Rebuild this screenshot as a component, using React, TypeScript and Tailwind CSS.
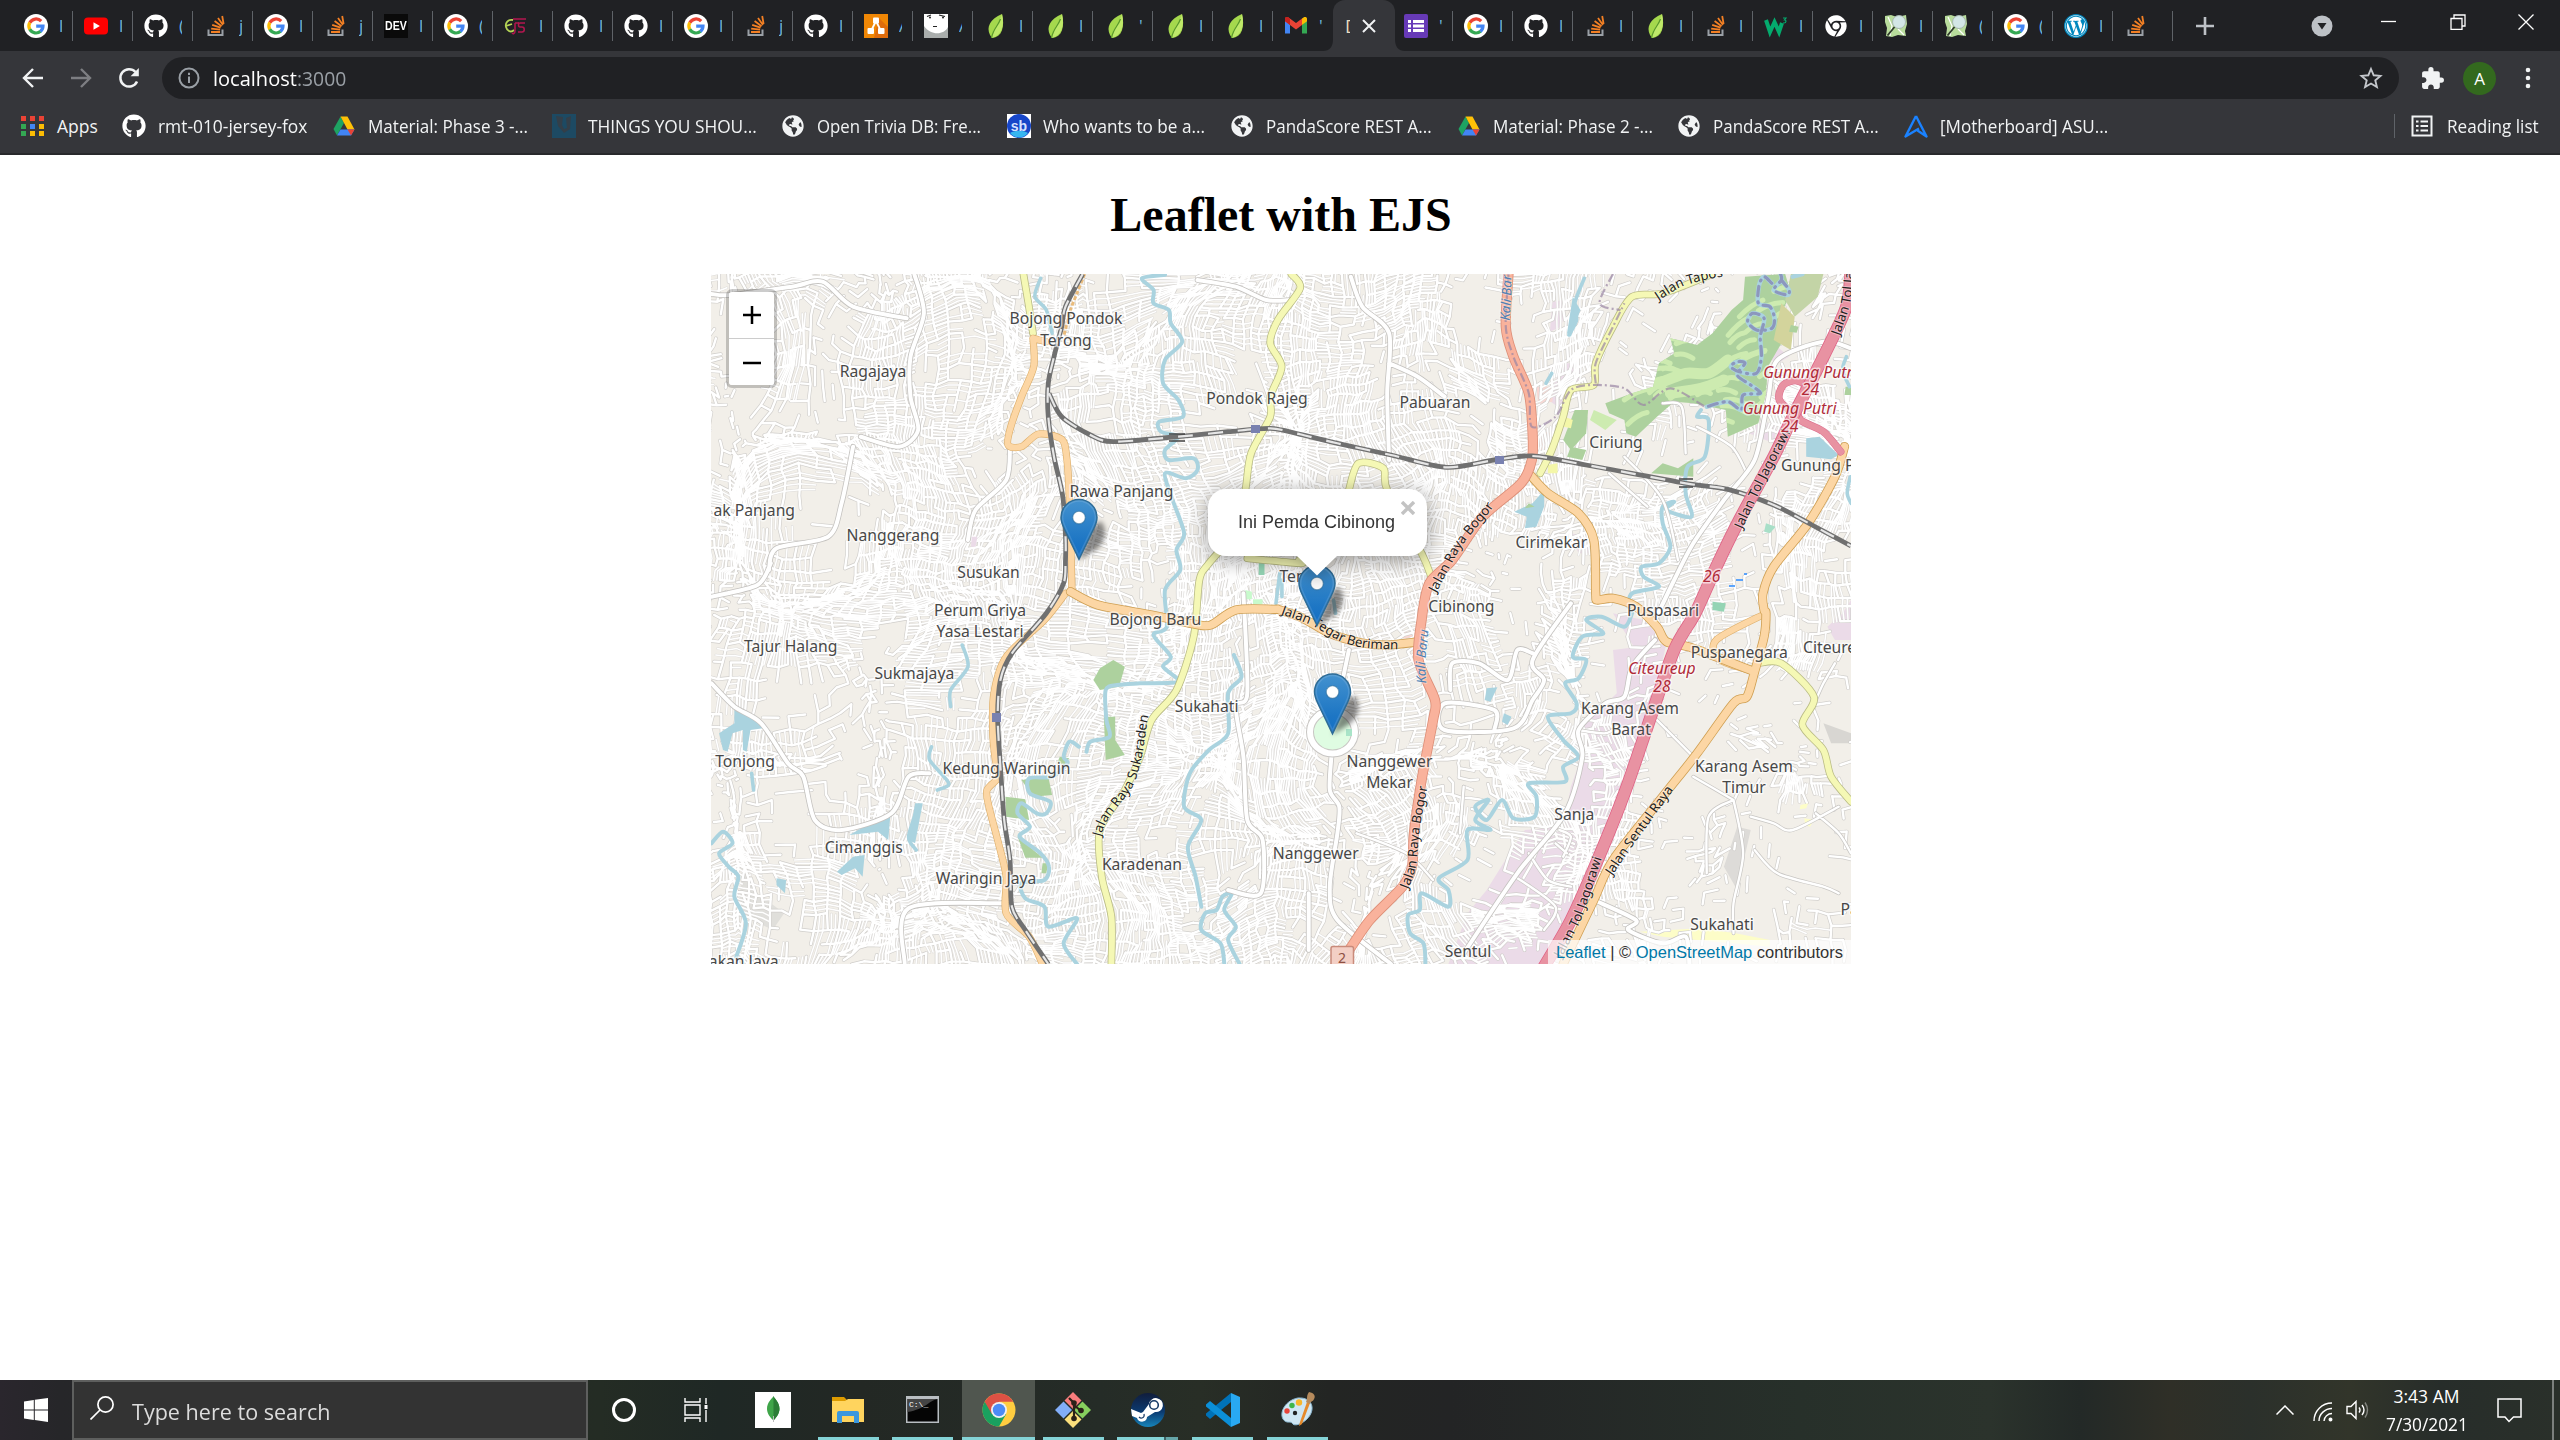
import React, { useLayoutEffect, useRef, useState } from "react";
import { FaChrome, FaGithub, FaWordpress, FaGlobeAmericas } from "react-icons/fa";
import { MdExtension } from "react-icons/md";

/* ---------- helpers ---------- */

/** Text squeezed or stretched to an exact advance width. */
function Fit({ w, className, children }: { w: number; className?: string; children: React.ReactNode }) {
  const ref = useRef<HTMLSpanElement>(null);
  const [k, setK] = useState(1);
  useLayoutEffect(() => {
    if (ref.current && ref.current.offsetWidth) setK(w / ref.current.offsetWidth);
  }, [w]);
  return (
    <span className={`block shrink-0 whitespace-nowrap ${className ?? ""}`} style={{ width: w }}>
      <span ref={ref} className="inline-block origin-left" style={{ transform: `scaleX(${k})` }}>
        {children}
      </span>
    </span>
  );
}

/* ---------- favicons ---------- */

const Google = () => (
  <svg viewBox="0 0 24 24" className="size-6">
    <circle cx="12" cy="12" r="12" fill="#fff" />
    <g fill="none" strokeWidth="3.2">
      <path d="M17.2 7.2A7.1 7.1 0 0 0 5.8 8.7" stroke="#ea4335" />
      <path d="M5.8 8.6a7.1 7.1 0 0 0 0 6.9" stroke="#fbbc05" />
      <path d="M5.8 15.3a7.1 7.1 0 0 0 10.8 2" stroke="#34a853" />
      <path d="M16.4 17.5a7 7 0 0 0 2.6-5.4h-6.8" stroke="#4285f4" />
    </g>
  </svg>
);
const YouTube = () => (
  <svg viewBox="0 0 24 24" className="size-6">
    <rect y="3.5" width="24" height="17" rx="4" fill="#f00" />
    <path d="M9.5 8.3v7.4l6.4-3.7z" fill="#fff" />
  </svg>
);
const GitHub = () => <FaGithub className="size-6 text-white" />;
const Stack = () => (
  <svg viewBox="0 0 24 24" className="size-6" fill="none">
    <path d="M4.5 15.5V21h14v-5.5" stroke="#9aa0a6" strokeWidth="2" />
    <path d="M7 18h9M7.2 14.6l8.9 1M8.2 10.8l8.4 2.9M10.6 7l7 5.2M14 4l5 7M18.2 2l1.4 8" stroke="#f48024" strokeWidth="1.8" />
  </svg>
);
const Dev = () => (
  <span className="flex size-6 items-center justify-center bg-[#0a0a0a]">
    <Fit w={22} className="font-['Liberation_Sans'] text-[13px] font-bold leading-6 text-white">DEV</Fit>
  </span>
);
const Ejs = () => (
  <svg viewBox="0 0 24 24" className="size-6" fill="none" strokeWidth="1.8">
    <path d="M9 6c-5-1-8 3-7 7s5 6 8 3M2 12l6-2" stroke="#b4d455" />
    <path d="M11 9v8c0 3-2 3-3 2M9 5h13M21 9h-5c-2 0-2 4 0 4h2c3 0 3 5 0 5h-4M11 9h4" stroke="#b3164f" strokeWidth="1.500" />
  </svg>
);
const Draw = () => (
  <svg viewBox="0 0 24 24" className="size-6">
    <rect width="24" height="24" fill="#f08705" />
    <path d="M15 4l9 9v11H10z" fill="#df6c0c" />
    <path d="M12 7L7 17M12 7l5 10" stroke="#fff" strokeWidth="1.8" />
    <rect x="9" y="3.5" width="6" height="6" rx="1" fill="#fff" />
    <rect x="3.5" y="14" width="6.5" height="6" rx="1" fill="#fff" />
    <rect x="14" y="14" width="6.5" height="6" rx="1" fill="#fff" />
  </svg>
);
const Face = () => (
  <svg viewBox="0 0 24 24" className="size-6">
    <rect width="24" height="24" fill="#a9adac" />
    <path d="M0 0h24v13c-4 8-17 9-24-1z" fill="#fff" />
    <path d="M3 2.500l4-1.500M15 1l6 1.500M9 12.500h4" stroke="#222" strokeWidth="1.100" />
    <circle cx="6" cy="3.500" r="1" fill="#222" />
    <circle cx="19" cy="3.500" r="1" fill="#222" />
  </svg>
);
const Leaf = () => (
  <svg viewBox="0 0 24 24" className="size-6">
    <path d="M18 0C6 5 2 13 6 21l2 3c10-1 13-11 10-24z" fill="#a5d84d" />
    <path d="M18 0c-2 8-9 13-10.500 24C17 22 21 12 18 0z" fill="#bfe86a" />
    <path d="M16.500 5C14 12 9 15 7.500 24" stroke="#5a9a2a" strokeWidth="1.300" fill="none" />
  </svg>
);
const Gmail = () => (
  <svg viewBox="0 0 24 24" className="size-6">
    <path d="M1 5.500v14h5V11z" fill="#4285f4" />
    <path d="M23 5.500v14h-5V11z" fill="#34a853" />
    <path d="M18 4.500V11l5-3.700V5c0-2-2-2.500-3.500-1.500z" fill="#fbbc04" />
    <path d="M1 7.300V5c0-2 2-2.500 3.500-1.500L12 9l6-4.500V11l-6 4.500L6 11z" fill="#ea4335" />
    <path d="M1 5v2.300L6 11V4.600L4.500 3.500C3 2.500 1 3 1 5z" fill="#c5221f" />
  </svg>
);
const Forms = () => (
  <svg viewBox="0 0 24 24" className="size-6">
    <rect width="24" height="24" rx="2" fill="#673ab7" />
    <path d="M4 6h3v3H4zM9 6h11v3H9zM4 10.500h3v3H4zM9 10.500h11v3H9zM4 15h3v3H4zM9 15h11v3H9z" fill="#fff" />
  </svg>
);
const W3 = () => (
  <svg viewBox="0 0 24 24" className="size-6" fill="none">
    <path d="M2 6l4 12 4.500-10L15 18l3-9" stroke="#04aa6d" strokeWidth="4" />
    <path d="M19 4h3l-1.500 2c2 0 2 3-.5 3H19" stroke="#04aa6d" strokeWidth="1.200" />
  </svg>
);
const ChromeMono = () => <FaChrome className="size-[22px] text-white" />;
const Osm = () => (
  <svg viewBox="0 0 24 24" className="size-6">
    <path d="M1 2l6-1 6 2 9-2 1 9-2 7 1 5-8-1-6 2-6-1 1-8-2-6z" fill="#b8dc9c" />
    <path d="M4 3l4 9-2 10M14 15l6 6" stroke="#fff" strokeWidth="1.200" fill="none" />
    <circle cx="15" cy="8" r="6.500" fill="#d3e6e6" stroke="#a8b8b0" />
    <path d="M10.500 13L3.500 21.500" stroke="#2f3a2a" strokeWidth="1.800" />
  </svg>
);
const WordPress = () => (
  <span className="flex size-6 items-center justify-center rounded-full bg-[#0087be]">
    <FaWordpress className="size-[22px] text-white" />
  </span>
);
const Drive = () => (
  <svg viewBox="0 0 24 24" className="size-6">
    <path d="M8.500 2.500L1.500 15 5 21.500 12 9z" fill="#1ea362" />
    <path d="M8.500 2.500h7L22.500 15.500h-7z" fill="#ffc107" />
    <path d="M5 21.500l3.500-6h14l-3.500 6z" fill="#4285f4" />
    <path d="M15.500 15.500h7L19 21.500z" fill="#ea4335" />
  </svg>
);
const Things = () => (
  <svg viewBox="0 0 24 24" className="size-6">
    <rect width="24" height="24" fill="#1d4a63" />
    <path d="M4 2l2 10 6 7 6-4 1-13-5 2 1 10-3 1-2-4 1-8z" fill="#333f49" />
  </svg>
);
const Globe = () => (
  <span className="flex size-6 items-center justify-center">
    <FaGlobeAmericas className="size-[22px] text-[#f1f3f4]" />
  </span>
);
const Sb = () => (
  <svg viewBox="0 0 24 24" className="size-6">
    <rect width="24" height="24" fill="#fff" />
    <circle cx="12" cy="12" r="12" fill="#1746c9" />
    <path d="M3 19c5-3 13-3 18 0-5 6-13 6-18 0z" fill="#36b6f0" />
    <text x="12" y="17" textAnchor="middle" fontFamily="Liberation Sans" fontWeight="bold" fontSize="14" fill="#d6e2ff">sb</text>
  </svg>
);
const Asus = () => (
  <svg viewBox="0 0 24 24" className="size-6" fill="none" stroke="#1a82ff" strokeWidth="2.400" strokeLinejoin="round">
    <path d="M12 2L1.500 22.500 15 14.500M12 2l10.500 20.500-9-6" />
  </svg>
);
const Apps = () => (
  <span className="grid size-6 grid-cols-3 content-center justify-end gap-[2.500px]">
    {["bg-[#ea4335]", "bg-[#ea4335]", "bg-[#ea4335]", "bg-[#34a853]", "bg-[#4285f4]", "bg-[#fbbc04]", "bg-[#34a853]", "bg-[#fbbc04]", "bg-[#fbbc04]"].map((c, i) => (
      <span key={i} className={`size-[5px] ${c}`} />
    ))}
  </span>
);

/* ---------- tab strip ---------- */

const tabs: [React.FC | null, string][] = [
  [Google, "l"], [YouTube, "l"], [GitHub, "("], [Stack, "j"], [Google, "l"], [Stack, "j"], [Dev, "l"], [Google, "("],
  [Ejs, "l"], [GitHub, "l"], [GitHub, "l"], [Google, "l"], [Stack, "j"], [GitHub, "l"], [Draw, "A"], [Face, "A"],
  [Leaf, "l"], [Leaf, "l"], [Leaf, "'"], [Leaf, "l"], [Leaf, "l"], [Gmail, "'"], [null, "D"], [Forms, "'"],
  [Google, "l"], [GitHub, "l"], [Stack, "l"], [Leaf, "l"], [Stack, "l"], [W3, "l"], [ChromeMono, "l"], [Osm, "l"],
  [Osm, "("], [Google, "("], [WordPress, "l"], [Stack, ""],
];

function TabStrip() {
  return (
    <div className="flex h-[51px] bg-[#202124] pl-[13px]">
      {tabs.map(([Icon, t], i) =>
        Icon ? (
          <div key={i} className="flex h-[51px] w-[60px] shrink-0 items-center pl-[11px]">
            <span className="flex size-6 items-center justify-center">
              <Icon />
            </span>
            <span className="ml-[11px] w-[3px] overflow-hidden text-[17px] leading-[22px] text-[#6fb4dc]">{t}</span>
            <span className={`ml-auto h-[30px] w-[1.500px] ${i === 21 ? "bg-transparent" : "bg-[#5f6368]"}`} />
          </div>
        ) : (
          <div key={i} className="flex h-[51px] w-[60px] shrink-0">
            <div className="relative flex h-[51px] w-[62px] shrink-0 items-center rounded-t-[12px] bg-[#35363a] pl-[12px]">
              <svg viewBox="0 0 82 12" className="absolute -left-[10px] bottom-0 h-3 w-[82px]">
                <path d="M0 12q10 0 10-12v12zM82 12q-10 0-10-12v12z" fill="#35363a" />
              </svg>
              <span className="w-[5px] overflow-hidden text-[18px] leading-6 text-[#e8dcc0]">{t}</span>
              <svg viewBox="0 0 14 14" className="ml-[12px] size-[14px]" stroke="#f1f3f4" strokeWidth="2">
                <path d="M1 1l12 12M13 1L1 13" />
              </svg>
            </div>
          </div>
        ),
      )}
      <svg viewBox="0 0 18 18" className="ml-[23px] mt-[17px] size-[18px]" stroke="#bdc1c6" strokeWidth="2.600">
        <path d="M9 0v18M0 9h18" />
      </svg>
      <svg viewBox="0 0 22 22" className="ml-[97px] mt-[15px] size-[22px]">
        <circle cx="11" cy="11" r="10.500" fill="#bdc1c6" />
        <path d="M6.500 8h9L11 14.500z" fill="#202124" />
      </svg>
      <svg viewBox="0 0 16 16" className="ml-[48px] mt-[14px] size-4" stroke="#fff" strokeWidth="1.300">
        <path d="M0 7.500h15" />
      </svg>
      <svg viewBox="0 0 16 16" className="ml-[53px] mt-[14px] size-4" stroke="#fff" strokeWidth="1.300" fill="none">
        <path d="M1 4.500h11v11H1zM4 4V1h11v11h-3" />
      </svg>
      <svg viewBox="0 0 16 16" className="ml-[52px] mt-[14px] size-4" stroke="#fff" strokeWidth="1.300">
        <path d="M.5.500l15 15M15.500.500l-15 15" />
      </svg>
    </div>
  );
}

function Toolbar() {
  return (
    <div className="flex h-[54px] items-center bg-[#35363a] pl-[22px]">
      <svg viewBox="0 0 22 22" className="size-[22px]" fill="none" stroke="#f1f3f4" strokeWidth="2.400">
        <path d="M21 11H2.500M11 2l-9 9 9 9" />
      </svg>
      <svg viewBox="0 0 22 22" className="ml-[26px] size-[22px]" fill="none" stroke="#7d7e82" strokeWidth="2.400">
        <path d="M1 11h18.500M11 2l9 9-9 9" />
      </svg>
      <svg viewBox="0 0 22 22" className="ml-[26px] size-[22px]" fill="none" stroke="#f1f3f4" strokeWidth="2.500">
        <path d="M19 14.500A8.700 8.700 0 1 1 17.500 5" />
        <path d="M20.800 1v8.200h-8.200z" fill="#f1f3f4" stroke="none" />
      </svg>
      <div className="ml-[22px] flex h-[42px] w-[2237px] items-center rounded-full bg-[#202124] pl-[16px]">
        <svg viewBox="0 0 22 22" className="size-[22px]" fill="none" stroke="#9aa0a6" strokeWidth="2">
          <circle cx="11" cy="11" r="9.500" />
          <path d="M11 9.500V16M11 5.800V8" />
        </svg>
        <Fit w={84} className="ml-[13px] text-[20.500px] leading-[30px] text-white">localhost</Fit>
        <Fit w={49} className="text-[20.500px] leading-[30px] text-[#9aa0a6]">:3000</Fit>
        <svg viewBox="0 0 24 24" className="ml-auto mr-[16px] size-[24px]" fill="none" stroke="#c4c7cc" strokeWidth="1.900">
          <path d="M12 3l2.700 6.300 6.800.6-5.200 4.500 1.600 6.700L12 17.500l-5.900 3.600 1.600-6.700L2.500 9.900l6.800-.6z" />
        </svg>
      </div>
      <MdExtension className="ml-[21px] size-[25px] text-[#f1f3f4]" />
      <span className="ml-[18px] flex size-[33px] items-center justify-center rounded-full bg-[#33691e] text-[17px] leading-none text-white">A</span>
      <svg viewBox="0 0 6 22" className="ml-[29px] h-[22px] w-[6px]" fill="#f1f3f4">
        <circle cx="3" cy="3" r="2.300" />
        <circle cx="3" cy="11" r="2.300" />
        <circle cx="3" cy="19" r="2.300" />
      </svg>
    </div>
  );
}

const bookmarks: [React.FC, string, number, string][] = [
  [Apps, "Apps", 41, "w-[101px]"],
  [GitHub, "rmt-010-jersey-fox", 149, "w-[210px]"],
  [Drive, "Material: Phase 3 -...", 160, "w-[220px]"],
  [Things, "THINGS YOU SHOU...", 169, "w-[229px]"],
  [Globe, "Open Trivia DB: Fre...", 164, "w-[226px]"],
  [Sb, "Who wants to be a...", 162, "w-[223px]"],
  [Globe, "PandaScore REST A...", 166, "w-[227px]"],
  [Drive, "Material: Phase 2 -...", 160, "w-[220px]"],
  [Globe, "PandaScore REST A...", 166, "w-[227px]"],
  [Asus, "[Motherboard] ASU...", 168, "w-[210px]"],
];

function Bookmarks() {
  return (
    <div className="flex h-[50px] items-center border-b-2 border-[#28292c] bg-[#35363a] pb-[6px] pl-[21px] pr-[21px] text-[17.500px] text-[#f1f3f4]">
      {bookmarks.map(([Icon, label, w, cls], i) => (
        <div key={i} className={`flex h-6 shrink-0 items-center ${cls}`}>
          <Icon />
          <Fit w={w} className="ml-3 leading-6">{label}</Fit>
        </div>
      ))}
      <span className="ml-auto h-6 w-[1.500px] bg-[#5f6368]" />
      <svg viewBox="0 0 22 22" className="ml-[16px] size-[22px]" fill="none" stroke="#f1f3f4" strokeWidth="2">
        <rect x="1.500" y="1.500" width="19" height="19" />
        <path d="M5 6.500h2.500M9.500 6.500H17M5 11h2.500M9.500 11H17M5 15.500h2.500M9.500 15.500H17" />
      </svg>
      <Fit w={92} className="ml-[14px] leading-6">Reading list</Fit>
    </div>
  );
}

/* ---------- map geometry ---------- */

/** The map is digitised in four sheets (a, b, c, d), each with its own origin and a common scale. */
const sheets: Record<string, [number, number]> = { a: [700, 170], b: [1280, 260], c: [700, 560], d: [1280, 600] };
const pts = (s: string): [number, number][] =>
  s.trim().split(/\s+/).map((p) => {
    const [ox, oy] = sheets[p[0]];
    const [u, v] = p.slice(1).split(",").map(Number);
    return [ox + u / 2.613, oy + v / 3];
  });
const n1 = (n: number) => n.toFixed(1);
function line(s: string) {
  const p = pts(s);
  let d = `M${n1(p[0][0])} ${n1(p[0][1])}`;
  for (let i = 0; i < p.length - 1; i++) {
    const a = p[Math.max(0, i - 1)], b = p[i], c = p[i + 1], e = p[Math.min(p.length - 1, i + 2)];
    d += `C${n1(b[0] + (c[0] - a[0]) / 7)} ${n1(b[1] + (c[1] - a[1]) / 7)} ${n1(c[0] - (e[0] - b[0]) / 7)} ${n1(c[1] - (e[1] - b[1]) / 7)} ${n1(c[0])} ${n1(c[1])}`;
  }
  return d;
}
const area = (s: string) => "M" + pts(s).map((p) => `${n1(p[0])} ${n1(p[1])}`).join("L") + "Z";

const rails = [
  "a1000,312 a955,410 a945,470 a925,560 a910,640 a910,740 a925,860 a948,980 a955,1100 c955,0 c950,70 c905,160 c815,280 c785,360 c778,470 c785,620 c795,780 c810,900 c815,1040 c850,1110 c910,1212",
  "a912,670 a945,740 a1020,795 a1080,815 a1250,800 a1380,785 a1490,775 a1568,793 b150,550 b290,585 b435,622 b560,600 b660,588 b800,615 b1060,670 b1170,688 b1290,735 b1390,795 b1492,858",
].map(line);
const orange = [
  "a870,505 a872,590 a840,680 a812,770 a805,825 a840,830 a885,792 a945,808 a958,860 a965,980 a970,1170 c972,95",
  "a905,515 a870,505",
  "c955,100 c900,180 c800,290 c768,400 c765,520 c772,600 c780,650 c750,690 c755,740 c780,850 c800,950 c800,1060 c860,1130 c895,1212",
  "d1270,40 d1140,120 d1150,180 d1240,215",
].map(line);
const orangeWide = [
  "c968,95 c1040,135 c1180,165 c1290,192 c1335,195 c1400,150 c1500,148 d0,30 d60,55 d130,100 d210,128 d280,135 d365,125",
  "b650,640 b700,700 b780,760 b820,840 b825,1000 b830,1020 b870,1015 d930,20 d985,80 d1010,125 d1080,145 d1240,215",
  "b1475,560 b1450,650 b1380,790 b1290,920 b1262,1000 b1265,1050 d1270,40 d1265,110 d1240,215 d1220,290 d1185,310 d1090,460 d1000,590 d870,780 d820,900 d740,1092",
].map(line);
const primary = [
  "b597,42 b590,200 b610,290 b650,400 b660,520 b658,600 b630,670 b530,770 b450,900 b390,970 b370,1080 d362,180 d405,300 d400,360 d370,540 d350,700 d345,800 d320,860 d235,960 d175,1060",
].map(line);
const motorway = [
  "b1492,30 b1480,140 b1420,290 b1340,470 b1290,590 b1200,780 b1140,920 b1085,1060 d1030,150 d960,380 d900,580 d830,780 d760,960 d690,1100",
].map(line);
const ramps = [
  "b1350,470 b1305,420 b1315,375 b1350,362 b1380,385 b1355,440 b1360,480 b1420,515 b1465,575",
].map(line);
const yellow = [
  "a845,312 a858,400 a870,490",
  "a1545,312 a1568,355 a1510,450 a1490,520 a1520,590 a1490,680 a1490,740 a1440,850 a1425,960 a1400,1080 a1330,1180 c1305,60 c1290,230 c1245,390 c1180,480 c1150,590 c1110,690 c1045,810 c1050,950 c1075,1070 c1075,1212",
  "b1130,42 b1000,100 b920,110 b870,200 b825,310 b820,375 b760,390 b740,470 b710,570 b680,640",
  "b180,690 b205,610 b270,625 b280,690 b370,880 b395,950",
  "a1430,1165 a1568,1180 b50,900",
  "d1250,190 d1310,190 d1395,290 d1365,375 d1420,450 d1440,530 d1492,605",
].map(line);
const rivers = [
  "a1215,314 a1155,325 a1185,360 a1185,400 a1225,420 a1230,460 a1260,515 a1215,570 a1210,640 a1250,690 a1262,740 a1200,755 a1205,785 a1250,800 a1215,840 a1225,870 a1290,865 a1300,900 a1270,925 a1215,910 a1235,990 a1265,1090 a1245,1140 a1255,1200 c1215,90 c1220,200 c1185,225 c1230,290 c1210,320 c1250,365 c1150,370 c1090,375 c1060,390 c1062,480 c1070,530 c1020,545 c1010,575",
  "c990,560 c965,545 c950,590 c960,610 c920,650 c860,655 c862,700 c915,725 c905,760 c880,760 c840,730 c830,760 c862,800 c835,830 c890,880 c912,920 c900,960 c840,970 c850,1015 c900,1040 c910,1100 c985,1075 c950,1150 c985,1212",
  "c1395,285 c1415,350 c1380,400 c1380,520 c1330,570 c1280,640 c1265,740 c1310,780 c1275,860 c1295,950 c1310,1040",
  "c1410,1212 c1380,1140 c1400,1100 c1370,1050 c1390,1000 c1365,1010 c1350,1050 c1320,1060 c1310,1110 c1360,1150 c1370,1212",
  "c30,850 c60,815 c85,850 c50,880 c75,920 c100,950 c90,1010 c120,1090 c95,1190",
  "d920,40 d900,80 d840,50 d800,60 d845,100 d790,110 d765,170 d800,180 d780,235 d745,250 d775,310 d760,340 d700,350 d740,420 d780,470 d740,500 d745,545 d650,550 d670,590 d665,650 d610,655 d580,600 d540,660 d510,620 d545,600 d510,660 d550,690 d490,690 d490,780 d415,835 d440,870 d440,920 d370,880 d365,930 d335,945 d340,1000 d375,1030 d380,1092",
  "b1100,450 b1090,470 b1120,480 b1110,590 b1065,620 b1060,700 b1075,770 b1010,750 b1030,725 b1000,740 b1000,790 b1020,860 b990,910 b945,920 b950,950 b990,980 b920,1000 b910,1040",
].map(line);
const streams = [
  "a890,325 a875,380 a905,420 a920,490", "c685,255 c700,320 c655,390 c655,440", "c605,560 c600,600 c650,670 c620,690",
  "b795,55 b770,130 b775,180 b755,225", "d140,0 d145,40", "c570,740 c545,830 c565,870", "c135,640 c140,690",
  "c1515,40 c1505,130", "b1480,290 b1470,330 b1488,380", "b5,960 b5,1010", "b710,340 b695,370", "b1490,650 b1482,700 b1492,730",
].map(line);
const mains = [
  "a30,372 a80,375 a240,350 a320,335 a400,410 a540,445", "a560,312 a585,430 a550,560 a550,680 a570,780 a520,830 a420,800",
  "a400,830 a370,1000 a335,1100 a200,1135 a180,1200", "a810,830 a800,930 a720,1020 a700,1110",
  "c30,370 c90,440 c160,490 c230,610 c270,650 c300,780 c370,810 c500,760 c545,650 c600,640", "c30,110 c150,75 c185,10",
  "c535,1212 c545,1045 c800,1030", "c1420,100 c1430,400 c1400,440 c1420,590 c1430,780 c1470,840 c1465,1000 c1380,990",
  "b185,50 b215,140 b285,220 b280,400 b285,600", "b285,310 b360,350 b430,410", "a1300,330 a1400,350 a1480,390 a1545,390",
  "b1492,265 b1420,245 b1300,300 b1275,420 b1240,600 b1160,720 b1080,850 b1030,960 b980,1080",
  "d760,10 d660,180 d690,240 d660,300 d610,385 d430,390 d430,310 d560,330 d560,390", "d660,160 d620,150 d595,240 d520,190 d450,190 d445,270",
  "d980,120 d920,200 d900,290 d850,310 d780,390 d790,470 d745,640 d620,820 d480,1060",
  "d135,460 d130,570 d155,620 d150,700 d130,860 d150,960 d290,1092", "d180,150 d160,260", "d75,1050 d75,880",
  "d820,900 d930,960 d910,990 d1000,1030 d1060,1010 d1070,1092",
].map(line);
const lanes = [
  "d1185,600 d1120,650 d1115,820", "d1185,600 d1210,760 d1185,910 d1185,1000", "d1230,650 d1290,670 d1340,690 d1460,620",
  "d1080,530 d1185,600", "d615,830 d720,920 d690,990", "d650,760 d700,840 d760,860", "d480,560 d470,700", "d200,700 d330,760 d400,840",
  "d1240,750 d1300,820 d1420,860 d1460,880", "d1400,300 d1420,250 d1450,190", "d1400,640 d1460,700 d1492,760", "d950,320 d1080,470",
  "b900,590 b1000,720 b1040,900", "b860,640 b960,740", "b1090,500 b1180,560 b1220,640", "b1000,430 b1050,440 b1060,580",
  "d780,390 d850,400 d880,380", "d730,690 d760,710 d740,770", "d720,730 d750,760",
].map(line);

/* Deterministic noise drives the residential street network. */
let seed = 77;
const rnd = () => {
  seed = (seed * 16807) % 2147483647;
  return seed / 2147483647;
};
const hash = (x: number, y: number) => {
  const s = Math.sin(x * 127.1 + y * 311.7) * 43758.5453;
  return s - Math.floor(s);
};
const noise = (x: number, y: number) => {
  const i = Math.floor(x), j = Math.floor(y);
  let f = x - i, g = y - j;
  f = f * f * (3 - 2 * f);
  g = g * g * (3 - 2 * g);
  return (hash(i, j) * (1 - f) + hash(i + 1, j) * f) * (1 - g) + (hash(i, j + 1) * (1 - f) + hash(i + 1, j + 1) * f) * g;
};
const density = (x: number, y: number) => {
  let k = noise(x / 46, y / 46) * 0.75 + noise(x / 20 + 9, y / 20) * 0.25;
  if (x < 900) k -= 0.05;
  else if (x < 1420) k += 0.15;
  if (x > 1420) k -= 0.04;
  if (x > 1480 && y > 600) k -= 0.08;
  if (x > 1650 && y > 620) k -= 0.14;
  return k;
};
/* A jittered, gently warped lattice: each kept edge is one street. */
const STEP = 9;
const node = (i: number, j: number): [number, number] => {
  const x = 690 + i * STEP, y = 255 + j * STEP;
  return [
    x + (noise(x / 70, y / 70 + 30) - 0.5) * 60 + (hash(i, j) - 0.5) * 5,
    y + (noise(x / 80 + 50, y / 80) - 0.5) * 60 + (hash(j + 3, i) - 0.5) * 5,
  ];
};
let streets = "";
let alleys = "";
for (let j = -3; j < 86; j++) {
  for (let i = -3; i < 137; i++) {
    const p = node(i, j), r = node(i + 1, j), b = node(i, j + 1), q = node(i + 1, j + 1);
    const k = density(p[0], p[1]);
    const keep = k < 0.3 ? 0.07 : k < 0.42 ? 0.36 : k < 0.52 ? 0.62 : 0.8;
    if (rnd() < keep) streets += `M${n1(p[0])} ${n1(p[1])}L${n1(r[0])} ${n1(r[1])}`;
    if (rnd() < keep) streets += `M${n1(p[0])} ${n1(p[1])}L${n1(b[0])} ${n1(b[1])}`;
    if (k > 0.47) {
      const across = noise(i / 5, j / 5 + 8) > 0.5;
      const [s, e, t, u] = across ? [p, r, b, q] : [p, b, r, q];
      for (const m of [0.33, 0.66]) {
        if (rnd() < 0.85)
          alleys += `M${n1(s[0] + (e[0] - s[0]) * m)} ${n1(s[1] + (e[1] - s[1]) * m)}L${n1(t[0] + (u[0] - t[0]) * m)} ${n1(t[1] + (u[1] - t[1]) * m)}`;
      }
    }
  }
}

let fairways = "";
for (let i = 0; i < 60; i++) {
  const x = 1620 + rnd() * 160, y = 280 + rnd() * 150;
  const a = -0.9 + noise(x / 40, y / 40) * 1.2;
  const l = 6 + rnd() * 10;
  fairways += `M${n1(x)} ${n1(y)}q${n1(Math.cos(a) * l)} ${n1(Math.sin(a) * l - 4)} ${n1(Math.cos(a) * l * 2)} ${n1(Math.sin(a) * l * 2)}`;
}
const golf =
  "b1215,50 b1320,42 b1335,100 b1310,160 b1320,230 b1300,270 b1275,320 b1270,400 b1250,490 b1170,530 b1165,450 b1080,430 b1030,425 b985,470 b930,530 b905,520 b900,480 b860,460 b850,430 b920,400 b975,380 b990,310 b1030,280 b1020,235 b1090,255 b1130,220 b1180,150 b1210,120";

const land: [string, string][] = [
  ["#ebdbe8", "d870,150 d1010,130 d960,380 d900,580 d830,780 d690,1092 d440,1092 d490,940 d540,870 d600,760 d640,690 d740,680 d760,560 d800,430 d790,380 d880,280"],
  ["#ebdbe8", "d870,40 d950,60 d1000,120 d930,150"],
  ["#ebdbe8", "b712,125 b750,120 b735,200 b705,215"], ["#ebdbe8", "b750,310 b790,310 b785,370 b740,450 b700,420 b720,360"],
  ["#ebdbe8", "d1430,80 d1470,40 d1492,0 d1492,120 d1450,120"], ["#f8d8d4", "b670,380 b712,380 b712,425 b675,432"],
  ["#f8d8d4", "b672,510 b710,520 b705,560 b675,580"], ["#f8d8d4", "d320,95 d362,95 d362,115 d320,115"],
  ["#ebdbe8", "b1300,260 b1330,290 b1300,310 b1285,300"], ["#ebdbe8", "b1250,490 b1300,490 b1290,550 b1225,520"],
  ["#ebdbe8", "b760,820 b800,830 b810,880 b780,880"],
  ["#d8d6d2", "d1420,370 d1492,400 d1492,430 d1440,430"],
  ["#dddbd8", "d1195,680 d1230,690 d1210,790 d1190,860 d1160,800"], ["#e0dfdb", "c110,930 c150,1000 c220,1060 c190,1110 c100,1060"],
  ["#fdfdc8", "d940,995 d1100,985 d1190,1000 d1280,1020 d1280,1040 d1000,1010"],
];
const green: [string, string][] = [
  ["#cdebb0", "b820,450 b880,480 b850,510 b810,480"],
  ["#c3d4a6", "b1335,42 b1420,42 b1405,110 b1345,170 b1320,120"], ["#d3d49c", "b1310,130 b1345,170 b1335,270 b1290,240"],
  ["#add19e", "b770,450 b805,450 b800,520 b760,570 b740,540"], ["#add19e", "b760,560 b800,570 b790,600 b750,590"],
  ["#add19e", "b1000,610 b1040,625 b1080,595 b1080,650 b970,640"], ["#add19e", "c1045,325 c1080,300 c1110,320 c1095,380 c1045,390 c1028,360"],
  ["#add19e", "c840,660 c910,650 c920,705 c870,710"], ["#add19e", "c798,710 c850,718 c860,780 c800,770"],
  ["#add19e", "c1055,470 c1085,470 c1085,540 c1110,585 c1060,600"], ["#add19e", "c830,830 c895,893 c850,893"],
  ["#add19e", "c895,910 c910,910 c905,940 c892,940"], ["#add19e", "c940,590 c965,595 c950,615 c935,605"],
  ["#94d4b4", "d1130,5 d1165,10 d1160,35 d1130,30"], ["#a8dfc8", "b1270,790 b1295,800 b1280,820 b1265,815"],
  ["#aad3df", "c90,450 c130,460 c165,505 c132,510 c122,575 c112,570 c112,510 c85,520 c72,575 c60,570 c50,520 c90,490"],
  ["#aad3df", "c390,825 c460,780 c497,770 c492,840 c465,815"], ["#aad3df", "c562,730 c582,730 c562,850 c545,840"],
  ["#aad3df", "c358,935 c400,890 c430,885 c425,950 c405,925 c370,945"], ["#aad3df", "c200,955 c225,960 c222,1000 c200,975"],
  ["#aad3df", "b1375,535 b1410,530 b1460,585 b1440,598 b1375,590"], ["#aad3df", "b690,690 b690,740 b670,800 b640,805 b645,770 b612,755 b660,730"],
  ["#aad3df", "d540,265 d568,262 d550,305 d535,300"], ["#aad3df", "d585,340 d605,350 d595,375 d580,365"], ["#aad3df", "b765,110 b785,150 b760,230 b750,220"],
  ["#add19e", "b650,730 b665,740 b640,745"], ["#c8facc", "c1425,90 c1442,95 c1442,118 c1425,118"], ["#c8facc", "c1445,118 c1470,118 c1470,133 c1445,133"],
  ["#94d4b4", "c1460,10 c1475,5 c1475,45 c1460,45"], ["#fdfdc8", "d1360,615 d1380,610 d1375,625 d1358,628"],
  ["#fdfdc8", "d1370,655 d1395,660 d1385,680 d1372,675"], ["#ebdbe8", "a710,1100 a725,1100 a720,1130 a708,1130"],
  ["#add19e", "b1335,195 b1355,200 b1350,218 b1330,215"], ["#add19e", "b1478,380 b1492,380 b1492,405 b1475,405"],
  ["#f4f7a8", "b745,470 b765,480 b760,505 b740,500"], ["#f4f7a8", "b700,615 b725,610 b725,640 b700,640"],
];

const labels: [string, number, number, string?][] = [
  ["Ragajaya", 873, 377], ["Bojong Pondok", 1066, 324], ["Terong", 1066, 345.5], ["Pondok Rajeg", 1257, 404], ["Rawa Panjang", 1121.5, 497],
  ["ak Panjang", 795, 516, "end"], ["Nanggerang", 893, 541], ["Susukan", 988.5, 578], ["Perum Griya", 980, 616], ["Yasa Lestari", 980, 637],
  ["Bojong Baru", 1155.4, 624.5], ["Tajur Halang", 790.7, 652], ["Sukmajaya", 914.3, 679], ["Sukahati", 1206.7, 711.5], ["Tonjong", 745, 767],
  ["Kedung Waringin", 1006.5, 774], ["Cimanggis", 863.8, 852.5], ["Waringin Jaya", 986, 884], ["Karadenan", 1142, 870], ["Nanggewer", 1315.7, 859],
  ["akan Jaya", 778.5, 967, "end"], ["Pabuaran", 1435, 408], ["Ciriung", 1616, 447.5], ["Cirimekar", 1551.3, 548], ["Cibinong", 1461.4, 611.7],
  ["Puspasari", 1663, 615.5], ["Gunung Putri", 1781, 471.3, "start"], ["Puspanegara", 1739.2, 657.7], ["Citeureup", 1803, 652.7, "start"],
  ["Karang Asem", 1630, 714], ["Barat", 1631, 735], ["Karang Asem", 1744, 771.5], ["Timur", 1744, 792.7], ["Nanggewer", 1389.5, 766.5],
  ["Mekar", 1389.5, 787.7], ["Sanja", 1574.3, 819.7], ["Sukahati", 1722, 930.3], ["Pa", 1840.6, 914.7, "start"], ["Sentul", 1468, 957], ["Tengah", 1279.500, 582, "start"],
];
const exits: [string, number, number][] = [
  ["Gunung Putri", 1810, 377.5], ["24", 1810.4, 395], ["Gunung Putri", 1789.8, 414], ["24", 1789.8, 432], ["26", 1711.7, 582], ["Citeureup", 1662, 674], ["28", 1662, 691.7],
];
const roadNames: [string, string, string][] = [
  ["Jalan Raya Bogor", "b408,1000 b440,930 b480,850 b545,760 b570,720", "#222"],
  ["Jalan Raya Bogor", "d335,868 d355,800 d365,690 d385,560 d390,500", "#222"],
  ["Jalan Sentul Raya", "d868,828 d920,740 d1012,595 d1050,530", "#222"],
  ["Jalan Tol Jagorawi", "d735,1075 d790,950 d835,795 d850,740", "#222"],
  ["Jalan Tol Jagorawi", "b1208,808 b1260,680 b1325,535 b1350,480", "#222"],
  ["Jalan Tol Jagorawi", "b1462,228 b1490,130 b1500,20 b1505,-60", "#222"],
  ["Jalan Tapos", "b990,122 b1050,80 b1130,55 b1200,45", "#222"],
  ["Jalan Raya Sukaraden", "c1048,830 c1065,780 c1130,680 c1155,590 c1168,490 c1175,460", "#222"],
  ["Jalan Tegar Beriman", "d2,42 d80,75 d160,125 d220,143 d300,148 d340,145", "#222"],
  ["Kali Baru", "d382,250 d380,180 d390,70 d392,0", "#4d80b3"],
  ["Kali Baru", "b600,182 b604,100 b604,20 b604,-50", "#4d80b3"],
];

const Strokes = ({ d, color, casing, w, cw }: { d: string[]; color: string; casing: string; w: number; cw: number }) => (
  <g fill="none" strokeLinecap="round" strokeLinejoin="round">
    <path d={d.join("")} stroke={casing} strokeWidth={cw} />
    <path d={d.join("")} stroke={color} strokeWidth={w} />
  </g>
);

function Marker({ x, y }: { x: number; y: number }) {
  return (
    <g transform={`translate(${x - 18.75} ${y - 61.5}) scale(1.5)`}>
      <path d="M12.500 41L24 34c6-5 8-13 3-19l-6 4z" fill="#000" fillOpacity=".45" filter="url(#soft)" />
      <path d="M12.500.6C5.900.6.5 6 .5 12.600c0 3 1.300 5.600 2.500 8.200L12.500 40.500 22 20.800c1.200-2.600 2.500-5.200 2.500-8.200C24.500 6 19.100.6 12.500.6z" fill="url(#pin)" stroke="#2e6c97" strokeWidth="1" />
      <path d="M12.500 1.700c-6 0-10.900 4.900-10.900 10.900 0 2.800 1.200 5.200 2.400 7.800l8.500 17.700 8.500-17.700c1.200-2.600 2.400-5 2.400-7.800 0-6-4.900-10.900-10.900-10.900z" fill="none" stroke="#fff" strokeOpacity=".12" />
      <circle cx="12.500" cy="12.700" r="4.200" fill="#fff" stroke="#2e6c97" strokeOpacity=".6" strokeWidth=".8" />
    </g>
  );
}

function MapDrawing() {
  return (
    <svg viewBox="711 274 1140 690" className="block h-[690px] w-[1140px]">
      <defs>
        <linearGradient id="pin" x1="0" y1="0" x2="0" y2="1">
          <stop offset="0" stopColor="#4492cf" />
          <stop offset=".7" stopColor="#1d76c4" />
          <stop offset="1" stopColor="#126fc6" />
        </linearGradient>
        <filter id="soft" x="-50%" y="-50%" width="200%" height="200%">
          <feGaussianBlur stdDeviation="1.800" />
        </filter>
        <clipPath id="course">
          <path d={area(golf)} />
        </clipPath>
        {roadNames.map(([, p], i) => (
          <path key={i} id={`road-${i}`} d={line(p)} />
        ))}
      </defs>
      <rect x="711" y="274" width="1140" height="690" fill="#f2efe9" />
      {land.map(([c, p], i) => (
        <path key={i} d={area(p)} fill={c} />
      ))}
      <g fill="none" strokeLinejoin="round" strokeLinecap="round">
        <path d={streets} stroke="#d0cecb" strokeWidth="3.700" />
        <path d={alleys} stroke="#dcdad8" strokeWidth="2.400" />
        <path d={streets} stroke="#fff" strokeWidth="2.400" />
        <path d={alleys} stroke="#fff" strokeWidth="1.500" />
      </g>
      <path d={area(golf)} fill="#add19e" />
      <g clipPath="url(#course)" fill="none" strokeLinecap="round">
        <path d={fairways} stroke="#cdebb0" strokeWidth="5" />
        <path d={line("b990,370 b1060,340 b1120,340 b1170,300") + line("b1020,400 b1100,385 b1160,360")} stroke="#cdebb0" strokeWidth="11" />
      </g>
      {green.map(([c, p], i) => (
        <path key={i} d={area(p)} fill={c} />
      ))}
      <g fill="none" stroke="#aad3df" strokeLinecap="round" strokeLinejoin="round">
        <path d={rivers.join("")} strokeWidth="4" />
        <path d={streams.join("")} strokeWidth="3.600" />
      </g>
      <g fill="none" strokeLinecap="round">
        <path d={line("b1365,42 b1340,50") + line("b1308,42 b1310,60 b1290,90 b1325,105 b1330,90 b1310,60") + line("b1285,70 b1265,50 b1252,75 b1250,130 b1280,140 b1292,175 b1285,205 b1245,210 b1222,185 b1235,160 b1265,175 b1255,230 b1258,290 b1245,340 b1200,335 b1178,320 b1195,305 b1215,310 b1195,345 b1230,375 b1255,400 b1210,405 b1205,450 b1170,425 b1115,440")} stroke="#aad3df" strokeWidth="4.500" />
        <path d={line("b1308,42 b1310,60 b1290,90 b1325,105 b1330,90 b1310,60") + line("b1285,70 b1265,50 b1252,75 b1250,130 b1280,140 b1292,175 b1285,205 b1245,210 b1222,185 b1235,160 b1265,175 b1255,230 b1258,290 b1245,340 b1200,335 b1178,320 b1195,305 b1215,310 b1195,345 b1230,375 b1255,400 b1210,405 b1205,450 b1170,425 b1115,440")} stroke="#8c97bd" strokeWidth="3.200" strokeDasharray="9 6 1 6" />
      </g>
      <Strokes d={lanes} color="#fff" casing="#c8c6c3" w={2.400} cw={3.800} />
      <Strokes d={mains} color="#fff" casing="#c4c2bf" w={4} cw={5.600} />
      <ellipse cx="1332.500" cy="732" rx="22.500" ry="21.500" fill="#dffce2" stroke="#c8c6c3" strokeWidth="8" />
      <ellipse cx="1332.500" cy="732" rx="22.500" ry="21.500" fill="none" stroke="#fff" strokeWidth="6" />
      <path d="M1346 729h6v7h-6z" fill="#a9e4c8" />
      <Strokes d={yellow} color="#f5f8b5" casing="#b9bb85" w={6} cw={7.600} />
      <Strokes d={orange} color="#fcd6a4" casing="#dcae6a" w={6} cw={7.200} />
      <Strokes d={orangeWide} color="#fcd6a4" casing="#cf9f52" w={7.600} cw={9.200} />
      <path d={line("a1005,312 a985,370 a968,420 a950,500")} fill="none" stroke="#e9bb7c" strokeWidth="3" strokeDasharray="4 2" />
      <Strokes d={ramps} color="#e892a2" casing="#dc6d8d" w={6.500} cw={7.500} />
      <Strokes d={primary} color="#f9b29c" casing="#dd8f78" w={8.500} cw={10.200} />
      <path d={line("b597,42 b590,200 b610,290 b650,400 b658,500 b720,470 b760,390 b820,375 b900,385 b950,435 b1020,385 b1110,440") + line("b825,370 b825,310 b870,200 b900,130") + line("b870,42 b835,130 b890,150")} fill="none" stroke="#9a86a4" strokeOpacity=".7" strokeWidth="2.200" strokeDasharray="9 3 2 3" />
      <g fill="none">
        <path d={rails.join("")} stroke="#707070" strokeWidth="4.800" />
        <path d={rails.join("")} stroke="#e6e6e6" strokeWidth="2.200" strokeDasharray="15 15" />
      </g>
      <Strokes d={motorway} color="#e892a2" casing="#df6285" w={11} cw={12.600} />
      <path d="M1251 425h9v8h-9zM1495 456h9v8h-9zM992 713h9v9h-9z" fill="#7981b0" />
      <path d="M1169 434h16M1169 441h16M1679 479h14M1679 487h14" stroke="#444" strokeWidth="1.500" />
      <path d="M1736 580h7M1729 586h6M1744 574h3" stroke="#2d8cff" strokeWidth="1.500" />
      <rect x="1331" y="946.500" width="22.500" height="30" rx="2" fill="#f3cfc5" stroke="#c98b7b" strokeWidth="1.500" />
      <text x="1342" y="963" textAnchor="middle" fontFamily="Noto Sans" fontSize="14" fill="#8d4f42">2</text>

      <g fontFamily="Noto Sans" fontSize="13.200" stroke="#fff" strokeOpacity=".35" strokeWidth="2" paintOrder="stroke">
        {roadNames.map(([t, , c], i) => (
          <text key={i} fill={c} fontStyle={c === "#222" ? "normal" : "italic"}>
            <textPath href={`#road-${i}`}>{t}</textPath>
          </text>
        ))}
      </g>
      <g fontFamily="Noto Sans" fontSize="15.700" fill="#484848" stroke="#fff" strokeOpacity=".65" strokeWidth="3" paintOrder="stroke" strokeLinejoin="round">
        {labels.map(([t, x, y, a], i) => (
          <text key={i} x={x} y={y} textAnchor={(a ?? "middle") as "middle"}>{t}</text>
        ))}
        {exits.map(([t, x, y], i) => (
          <text key={i} x={x} y={y} textAnchor="middle" fontStyle="italic" fill="#b02a38">{t}</text>
        ))}
      </g>
      <Marker x={1079} y={560} />
      <Marker x={1317} y={626} />
      <Marker x={1332.500} y={734.500} />
    </svg>
  );
}

function LeafletMap() {
  return (
    <div className="relative h-[690px] w-[1140px] overflow-hidden font-['Liberation_Sans',sans-serif]">
      <MapDrawing />
      <div className="absolute left-[15px] top-[15px] flex flex-col rounded-[6px] border-[3px] border-black/20 bg-clip-padding">
        <span className="flex h-[47px] w-[45px] items-center justify-center rounded-t-[3px] border-b border-[#ccc] bg-white">
          <svg viewBox="0 0 18 18" className="size-[18px]" stroke="#000" strokeWidth="2.500"><path d="M9 0v18M0 9h18" /></svg>
        </span>
        <span className="flex h-[46px] w-[45px] items-center justify-center rounded-b-[3px] bg-white">
          <svg viewBox="0 0 18 18" className="size-[18px]" stroke="#000" strokeWidth="2.500"><path d="M0 10h18" /></svg>
        </span>
      </div>
      <div className="absolute left-[497px] top-[215px] h-[67px] w-[219px] drop-shadow-[0_4px_10px_rgba(0,0,0,0.4)]">
        <div className="flex h-[67px] items-center rounded-[18px] bg-white pb-[2px] pl-[30px] text-[#333]">
          <Fit w={157} className="text-[18px] leading-6">Ini Pemda Cibinong</Fit>
        </div>
        <svg viewBox="0 0 40 20" className="absolute left-[89px] top-[66.500px] h-5 w-10"><path d="M0 0h40L20 19.500z" fill="#fff" /></svg>
        <svg viewBox="0 0 14 14" className="absolute right-[12px] top-[12px] size-[14px]" stroke="#c3c3c3" strokeWidth="3.400"><path d="M1 1l12 12M13 1L1 13" /></svg>
      </div>
      <div className="absolute bottom-0 right-0 flex h-6 w-[303px] items-center bg-white/70 pl-[8px] text-[#333]">
        <Fit w={287} className="text-[16.500px] leading-6">
          <span className="text-[#0078a8]">Leaflet</span> | © <span className="text-[#0078a8]">OpenStreetMap</span> contributors
        </Fit>
      </div>
    </div>
  );
}

/* ---------- taskbar ---------- */

const Explorer = () => (
  <svg viewBox="0 0 36 36" className="size-9">
    <path d="M2 5h12l3 3v5H2z" fill="#dd9b00" />
    <path d="M2 9h13l3-2h16v23H2z" fill="#ffd45e" />
    <path d="M7 31V21q0-2 2-2h18q2 0 2 2v10h-5v-7H12v7z" fill="#3b97dd" />
  </svg>
);
const Cmd = () => (
  <svg viewBox="0 0 36 36" className="size-9">
    <rect x="2" y="4" width="33" height="27" fill="#b9bec2" />
    <rect x="3.500" y="7" width="30" height="22.500" fill="#050505" />
    <path d="M3.500 7h30C24 9 22 17 3.500 20z" fill="#444" />
    <text x="5" y="14.500" fontFamily="Liberation Mono" fontSize="8" fill="#fff">C:\_</text>
  </svg>
);
const Chrome = () => (
  <svg viewBox="0 0 36 36" className="size-9">
    <circle cx="18" cy="18" r="16.500" fill="#ffcd40" />
    <path d="M18 18L3.700 9.700A16.500 16.500 0 0 0 18 34.500L25.200 22z" fill="#1aa15f" />
    <path d="M18 18V9.700h14.300A16.500 16.500 0 0 0 3.700 9.700L10.800 22z" fill="#dd5144" />
    <circle cx="18" cy="18" r="8" fill="#f1f1f1" />
    <circle cx="18" cy="18" r="6.200" fill="#4c8bf5" />
  </svg>
);
const Git = () => (
  <svg viewBox="0 0 36 36" className="size-9">
    <path d="M18 0l8.500 8.500L18 17 9.500 8.500z" fill="#f87d7d" />
    <path d="M27.500 9.500L36 18l-8.500 8.500L19 18z" fill="#87cf5e" />
    <path d="M8.500 9.500L17 18l-8.500 8.500L0 18z" fill="#82aef8" />
    <path d="M18 19l8.500 8.500L18 36l-8.500-8.500z" fill="#fbe07c" />
    <path d="M14 6l5 5v16M19 13l7 6" stroke="#2b2118" strokeWidth="2.200" fill="none" />
    <circle cx="19" cy="11" r="2.800" fill="#2b2118" />
    <circle cx="26" cy="18.500" r="2.800" fill="#2b2118" />
    <circle cx="19" cy="26.500" r="2.800" fill="#2b2118" />
  </svg>
);
const Steam = () => (
  <svg viewBox="0 0 36 36" className="size-9">
    <defs>
      <linearGradient id="steam" x1="0" y1="0" x2="0" y2="1">
        <stop offset="0" stopColor="#111d3c" />
        <stop offset=".55" stopColor="#0b3a70" />
        <stop offset="1" stopColor="#1785ba" />
      </linearGradient>
    </defs>
    <circle cx="18" cy="18" r="17" fill="url(#steam)" />
    <path d="M1 17l10 4 2-1 6-8a7 7 0 1 1 6 8l-8 5c0 6-9 6-10 1l-5-2z" fill="#fff" />
    <circle cx="24" cy="13" r="4.300" fill="#fff" stroke="#173a66" strokeWidth="1.600" />
    <path d="M9 25c2 2 6 1 5-3" stroke="#173a66" strokeWidth="1.200" fill="none" />
  </svg>
);
const Code = () => (
  <svg viewBox="0 0 36 36" className="size-9">
    <path d="M26 1l9 4v26l-9 4z" fill="#29a9f2" />
    <path d="M26 1v9L5 27l-4-3.500v-2z" fill="#0072b8" />
    <path d="M26 35v-9L5 9l-4 3.500v2z" fill="#0b8fd8" />
  </svg>
);
const Paint = () => (
  <svg viewBox="0 0 36 36" className="size-9">
    <path d="M18 6C6 8-1 20 3 27c3 5 8 2 9 4 2 4 10 1 15-4 9-9 6-22-9-21z" fill="#cfe6f3" stroke="#8ebbd4" />
    <circle cx="7" cy="19" r="2.700" fill="#e8443a" />
    <circle cx="12" cy="13.500" r="2.700" fill="#3fb54a" />
    <circle cx="19" cy="10.500" r="3.200" fill="#f8b62c" />
    <circle cx="15" cy="21" r="2.200" fill="#222" />
    <path d="M30 11L22 32l-3 2 1-4L27 10z" fill="#e58a2c" />
    <path d="M26 10c2-4 0-6 3-10 5 1 7 4 5 7-1 3-4 2-4 5z" fill="#b58a5c" />
  </svg>
);
const Mongo = () => (
  <svg viewBox="0 0 36 36" className="size-9">
    <rect width="36" height="36" fill="#fff" />
    <path d="M18.500 4c1 3 6 6 6 13 0 5-4 9-5.500 11h-1c-2-2-6-6-6-11 0-7 5-10 6.500-13z" fill="#3fa549" />
    <path d="M18.500 4v24h.5c1.500-2 5.500-6 5.500-11 0-7-5-10-6-13z" fill="#2b7d36" />
    <path d="M18.500 24v6" stroke="#bbb" />
  </svg>
);

function Task({ icon: Icon, cls, bar, split }: { icon: React.FC; cls: string; bar: string; split?: boolean }) {
  return (
    <div className={`flex h-[60px] shrink-0 flex-col items-center ${cls}`}>
      <div className="flex h-[57px] items-center pt-[3px]">
        <Icon />
      </div>
      <div className={`flex h-[3px] justify-end bg-[#84d3d6] ${bar}`}>
        {split && <span className="h-[3px] w-[14px] border-l-2 border-[#3d6264] bg-[#65a5a8]" />}
      </div>
    </div>
  );
}

function Taskbar() {
  return (
    <div className="flex h-[60px] bg-[linear-gradient(90deg,#2a262d_0px,#262629_60px,#242c24_600px,#1f2825_720px,#232824_860px,#252c27_1100px,#282e26_1200px,#232523_1330px,#232425_1450px,#27302a_1800px,#2b332c_1990px,#232927_2080px,#2f2f27_2170px,#2b302b_2250px,#32352a_2350px,#272d2a_2440px,#2a302a_2560px)]">
      <div className="flex w-[72px] items-center justify-center">
        <svg viewBox="0 0 24 24" className="size-6" fill="#fff">
          <path d="M0 3.400L9.800 2v9.500H0zM10.800 1.800L24 0v11.500H10.800zM0 12.500h9.800V22L0 20.600zM10.800 12.500H24V24l-13.200-1.900z" />
        </svg>
      </div>
      <div className="flex h-[60px] w-[516px] items-center border-2 border-[#5e5f5e] bg-[#333] pl-[16px]">
        <svg viewBox="0 0 24 24" className="-mt-1 size-6" fill="none" stroke="#fff" strokeWidth="1.700">
          <circle cx="15.500" cy="8.500" r="7.600" />
          <path d="M10 14L.5 23.500" />
        </svg>
        <Fit w={198} className="ml-[18px] mt-[2px] text-[22px] leading-8 text-[#dcdcdc]">Type here to search</Fit>
      </div>
      <div className="flex w-[72px] items-center justify-center">
        <span className="size-6 rounded-full border-[3px] border-white" />
      </div>
      <div className="flex w-[72px] items-center justify-center">
        <svg viewBox="0 0 24 24" className="size-6" fill="none" stroke="#fff" strokeWidth="1.400">
          <path d="M1 7h15v10H1zM1 0v4h15V0M1 24v-4h15v4M22 0v6M22 12v12" />
          <path d="M22 7v4" strokeWidth="3" />
        </svg>
      </div>
      <Task icon={Mongo} cls="w-[82px]" bar="w-0" />
      <Task icon={Explorer} cls="w-[68px]" bar="w-[61px]" />
      <Task icon={Cmd} cls="w-[80px]" bar="w-[61px]" />
      <Task icon={Chrome} cls="w-[73px] bg-[#50564f]" bar="w-[73px]" />
      <Task icon={Git} cls="w-[76px]" bar="w-[61px]" />
      <Task icon={Steam} cls="w-[73px]" bar="w-[61px]" split />
      <Task icon={Code} cls="w-[77px]" bar="w-[61px]" />
      <Task icon={Paint} cls="w-[73px]" bar="w-[61px]" />
      <div className="ml-auto flex items-center text-white">
        <svg viewBox="0 0 18 10" className="h-[10px] w-[18px]" fill="none" stroke="#fff" strokeWidth="1.500"><path d="M.5 9.500L9 1l8.500 8.500" /></svg>
        <svg viewBox="0 0 20 20" className="ml-[19px] mt-[4px] size-5" fill="none" stroke="#fff" strokeWidth="1.400">
          <path d="M1 19C1 9 9 1 19 1" />
          <path d="M6 19c0-7 6-12.500 13-12.500M11 19c0-4 4-7.500 8-7.500" />
          <circle cx="17.500" cy="17.500" r="1.300" fill="#fff" />
        </svg>
        <svg viewBox="0 0 24 20" className="ml-[13px] h-5 w-6" fill="none" stroke="#fff" strokeWidth="1.400">
          <path d="M1 6.500h4l5-5v17l-5-5H1zM13 7.500q2 2.500 0 5M16 5q4 5 0 10" />
          <path d="M19 2.500q5 7.500 0 15" strokeOpacity=".4" />
        </svg>
        <div className="ml-[15px] mr-px flex w-[83px] flex-col items-center text-[17.500px] leading-7">
          <Fit w={66}>3:43 AM</Fit>
          <Fit w={82}>7/30/2021</Fit>
        </div>
        <svg viewBox="0 0 25 25" className="ml-[28px] size-[25px]" fill="none" stroke="#fff" strokeWidth="1.500">
          <path d="M1 1h23v18h-7.500L12 23.500 8 19H1z" />
        </svg>
        <span className="ml-[30px] h-[60px] w-[2px] bg-[#7c807d]" />
        <span className="w-[6px]" />
      </div>
    </div>
  );
}

export default function App() {
  return (
    <div className="flex h-[1440px] w-[2560px] flex-col overflow-hidden bg-white font-['Open_Sans','Noto_Sans',sans-serif]">
      <TabStrip />
      <Toolbar />
      <Bookmarks />
      <main className="flex flex-1 flex-col items-center pl-[2px]">
        <h1 className="my-8 font-['Liberation_Serif',serif] text-[48px] font-bold leading-[55px] text-black">Leaflet with EJS</h1>
        <LeafletMap />
      </main>
      <Taskbar />
    </div>
  );
}
